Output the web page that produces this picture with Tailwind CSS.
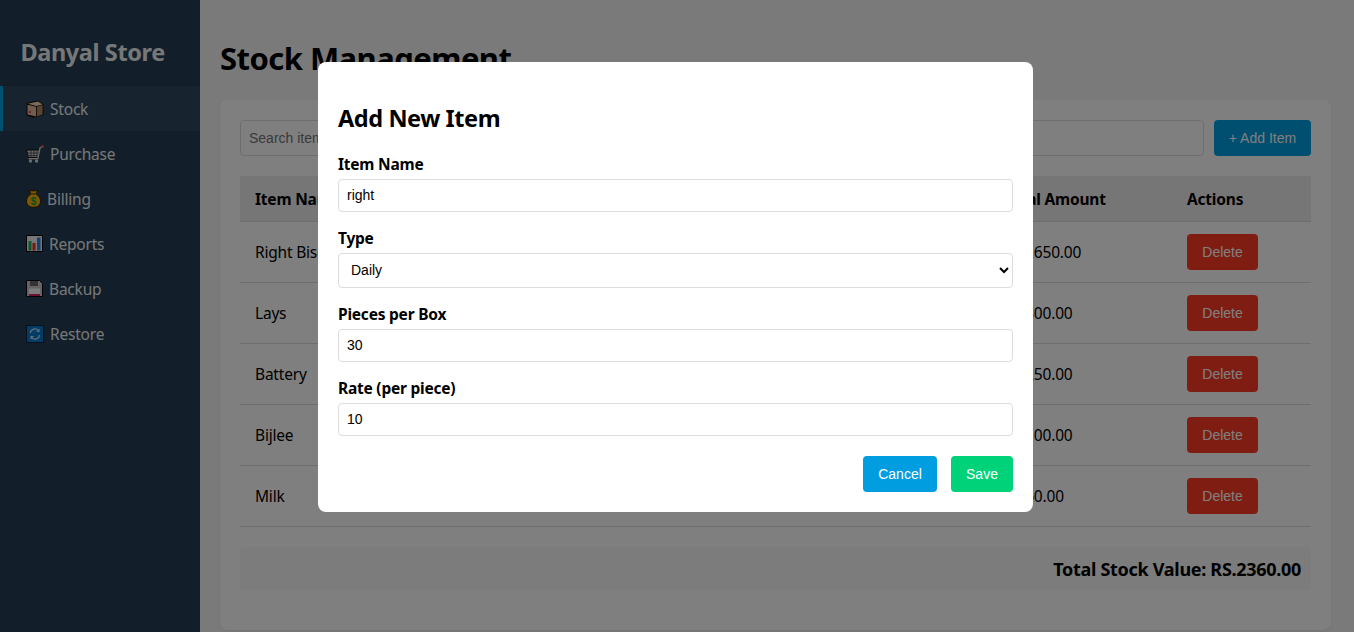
<!DOCTYPE html>
<html lang="en">
<head>
  <meta charset="UTF-8" />
  <meta name="viewport" content="width=device-width, initial-scale=1" />
  <title>Danyal Store - Stock Management</title>
  <script src="https://cdn.jsdelivr.net/npm/@tailwindcss/browser@4"></script>
</head>
<body class="bg-[#f5f5f5] font-['Noto_Sans',sans-serif] text-black">
  <div class="relative w-screen h-screen overflow-hidden">
    <div class="flex w-[1351px] h-full">

      <!-- Sidebar -->
      <aside class="w-[200px] shrink-0 bg-[#243c52] text-[#fff]">
        <h1 class="pt-[36px] pl-[20.5px] h-[86px] text-[23.5px] leading-[33px] font-bold tracking-[-0.4px] text-[#ecf0f1]">Danyal Store</h1>
        <nav class="text-[15.5px] text-[#ecf0f1] tracking-[-0.2px]">
          <a class="flex items-center h-[45px] pl-[23px] border-l-[3px] border-[#00a0e0] bg-[#2e475e]">
            <svg class="w-[18px] h-[18px] mr-[6px]" viewBox="0 0 18 18"><path d="M.5 3L12 .5l5.500 4V15L8 17.800.5 15.500z" fill="#0c0c0c"/><path d="M1.500 4.800l8.500 2v9.800l-8.500-2z" fill="#e6b893"/><path d="M10.800 6.800l5.800-1.800v9.500l-5.800 1.900z" fill="#b08560"/><path d="M1.800 3.800L12 1.500l4.500 2.900-6 1.700z" fill="#f5d8b8"/><rect x="3" y="11" width="2" height="2" fill="#e04050"/></svg>
            <span class="pt-[2px]">Stock</span>
          </a>
          <a class="flex items-center h-[45px] pl-[26px]">
            <svg class="w-[18px] h-[18px] mr-[6px]" viewBox="0 0 18 18"><path d="M.5 5h13l-1.500 7.500H2.500z" fill="#cfcfcf" stroke="#111"/><path d="M2 8h10.500M2.500 10.500h9.500M5 5v7.500M8 5v7.500M11 5v7.500" stroke="#444" stroke-width=".8"/><path d="M12 13l2-10 2.500-1.500" fill="none" stroke="#d8d8d8" stroke-width="1.300"/><circle cx="16.500" cy="1.500" r="1.400" fill="#f05050"/><rect x="2.500" y="13" width="10" height="1.300" fill="#d8d8d8"/><circle cx="4.500" cy="16" r="1.700" fill="#d8d8d8"/><circle cx="10.500" cy="16" r="1.700" fill="#d8d8d8"/></svg>
            <span class="pt-[2px]">Purchase</span>
          </a>
          <a class="flex items-center h-[45px] pl-[26px]">
            <svg class="w-[15px] h-[18px] mr-[6px]" viewBox="0 0 15 18"><path d="M3 .8h9l-2 3c1 1 4.500 3 4.500 7.500 0 4-3 6-7 6s-7-2-7-6C.5 6.800 4 4.800 5 3.800z" fill="#f2ae0a" stroke="#2a1c00"/><rect x="4.500" y="3.200" width="6" height="1.300" fill="#7a5500"/><text x="7.500" y="14.500" font-size="10" font-weight="700" text-anchor="middle" fill="#14a040" font-family="Liberation Sans">$</text></svg>
            <span class="pt-[2px]">Billing</span>
          </a>
          <a class="flex items-center h-[45px] pl-[26px]">
            <svg class="w-[17px] h-[17px] mr-[6px]" viewBox="0 0 17 17"><rect x=".5" y=".5" width="16" height="16" fill="#eeeeee" stroke="#000"/><rect x="2.500" y="6" width="3" height="9.500" fill="#18b060"/><rect x="6.500" y="8" width="3" height="7.500" fill="#e83020"/><rect x="11" y="2.500" width="3.500" height="13" fill="#2088e8"/></svg>
            <span class="pt-[2px]">Reports</span>
          </a>
          <a class="flex items-center h-[45px] pl-[26px]">
            <svg class="w-[17px] h-[17px] mr-[6px]" viewBox="0 0 17 17"><path d="M.5.5h13l3 3v13H.5z" fill="#c8c8c8" stroke="#000"/><rect x="4" y="1" width="8" height="5" fill="#666"/><rect x="3" y="8.500" width="11" height="7.500" fill="#f8f8f8"/><rect x="3" y="14" width="11" height="2" fill="#d8206a"/></svg>
            <span class="pt-[2px]">Backup</span>
          </a>
          <a class="flex items-center h-[45px] pl-[26px]">
            <svg class="w-[18px] h-[18px] mr-[6px]" viewBox="0 0 18 18"><rect x=".5" y=".5" width="17" height="17" fill="#0a78c8" stroke="#06233c"/><path d="M4.300 8a4.800 4.800 0 0 1 8.200-2.700M13.700 10a4.800 4.800 0 0 1-8.200 2.700" fill="none" stroke="#bfe3ff" stroke-width="1.200"/><path d="M13.500 3.500v3.500h-3.500zM4.500 14.500v-3.500h3.500z" fill="#bfe3ff"/></svg>
            <span class="pt-[2px]">Restore</span>
          </a>
        </nav>
      </aside>

      <!-- Main -->
      <main class="flex-1 min-w-0 px-[20px]">
        <h2 class="pt-[36px] h-[100px] text-[31px] leading-[44px] font-bold tracking-[-0.55px]">Stock Management</h2>
        <section class="bg-white rounded-[8px] shadow-[0_2px_5px_rgba(0,0,0,0.05)] p-[20px] h-[530px]">
          <div class="flex gap-[10px] mb-[21px] h-[36px]">
            <input type="text" placeholder="Search items..." class="flex-1 min-w-0 h-[36px] px-[8px] border border-[#ddd] rounded-[4px] text-[14px] font-['Liberation_Sans',sans-serif] placeholder:text-[#757575]" />
            <button class="w-[97px] h-[36px] bg-[#009ee0] text-white rounded-[4px] text-[14px] font-['Liberation_Sans',sans-serif]">+ Add Item</button>
          </div>

          <table class="w-full table-fixed border-collapse text-[15.5px] tracking-[-0.2px] -mt-[1px] [&_td:not(:last-child)]:pt-[2px] [&_th]:pt-[2px]">
            <colgroup>
              <col class="w-[180px]" /><col class="w-[150px]" /><col class="w-[190px]" /><col class="w-[120px]" /><col class="w-[108.5px]" /><col class="w-[183.5px]" /><col class="w-[139px]" />
            </colgroup>
            <thead>
              <tr class="h-[45px] bg-[#ececec] border-b border-[#ddd] text-left">
                <th class="pl-[15px] font-bold">Item Name</th>
                <th class="pl-[15px] font-bold">Type</th>
                <th class="pl-[15px] font-bold">Pieces per Box</th>
                <th class="pl-[15px] font-bold">Rate</th>
                <th class="pl-[15px] font-bold">Stock</th>
                <th class="pl-[15px] font-bold">Total Amount</th>
                <th class="pl-[15px] font-bold">Actions</th>
              </tr>
            </thead>
            <tbody>
              <tr class="h-[61px] border-b border-[#ddd]">
                <td class="pl-[15px]">Right Biscuit</td><td class="pl-[15px]">Daily</td><td class="pl-[15px]">30</td><td class="pl-[15px]">10</td><td class="pl-[15px]">165</td><td class="pl-[15px]">RS.1650.00</td>
                <td class="pl-[15px]"><button class="w-[71px] h-[36px] pt-[1px] bg-[#fe3b26] text-white rounded-[4px] text-[14px] font-['Liberation_Sans',sans-serif] tracking-normal">Delete</button></td>
              </tr>
              <tr class="h-[61px] border-b border-[#ddd]">
                <td class="pl-[15px]">Lays</td><td class="pl-[15px]">Daily</td><td class="pl-[15px]">24</td><td class="pl-[15px]">10</td><td class="pl-[15px]">30</td><td class="pl-[15px]">RS.300.00</td>
                <td class="pl-[15px]"><button class="w-[71px] h-[36px] pt-[1px] bg-[#fe3b26] text-white rounded-[4px] text-[14px] font-['Liberation_Sans',sans-serif] tracking-normal">Delete</button></td>
              </tr>
              <tr class="h-[61px] border-b border-[#ddd]">
                <td class="pl-[15px]">Battery</td><td class="pl-[15px]">Daily</td><td class="pl-[15px]">10</td><td class="pl-[15px]">25</td><td class="pl-[15px]">10</td><td class="pl-[15px]">RS.250.00</td>
                <td class="pl-[15px]"><button class="w-[71px] h-[36px] pt-[1px] bg-[#fe3b26] text-white rounded-[4px] text-[14px] font-['Liberation_Sans',sans-serif] tracking-normal">Delete</button></td>
              </tr>
              <tr class="h-[61px] border-b border-[#ddd]">
                <td class="pl-[15px]">Bijlee</td><td class="pl-[15px]">Daily</td><td class="pl-[15px]">10</td><td class="pl-[15px]">10</td><td class="pl-[15px]">10</td><td class="pl-[15px]">RS.100.00</td>
                <td class="pl-[15px]"><button class="w-[71px] h-[36px] pt-[1px] bg-[#fe3b26] text-white rounded-[4px] text-[14px] font-['Liberation_Sans',sans-serif] tracking-normal">Delete</button></td>
              </tr>
              <tr class="h-[61px] border-b border-[#ddd]">
                <td class="pl-[15px]">Milk</td><td class="pl-[15px]">Daily</td><td class="pl-[15px]">12</td><td class="pl-[15px]">5</td><td class="pl-[15px]">12</td><td class="pl-[15px]">RS.60.00</td>
                <td class="pl-[15px]"><button class="w-[71px] h-[36px] pt-[1px] bg-[#fe3b26] text-white rounded-[4px] text-[14px] font-['Liberation_Sans',sans-serif] tracking-normal">Delete</button></td>
              </tr>
            </tbody>
          </table>

          <div class="mt-[20px] h-[43px] pr-[10px] pt-[2px] flex items-center justify-end bg-[#f8f8f8] rounded-[4px] text-[18px] font-bold tracking-[-0.3px]">Total Stock Value: RS.2360.00</div>
        </section>
      </main>
    </div>

    <!-- Add item modal -->
    <div class="absolute inset-0 bg-black/50">
      <form class="absolute left-[318px] top-[62px] w-[715px] h-[450px] bg-white rounded-[8px] px-[20px] pt-[40px]">
        <h3 class="text-[23.5px] leading-[32px] font-bold mb-[19px] tracking-[-0.42px]">Add New Item</h3>
        <div class="mb-[15px]">
          <label class="block mb-[4px] text-[15.5px] leading-[22px] font-bold tracking-[-0.22px]">Item Name</label>
          <input type="text" value="right" class="block w-full h-[33px] px-[8px] pb-[1px] border border-[#ddd] rounded-[4px] text-[14px] font-['Liberation_Sans',sans-serif]" />
        </div>
        <div class="mb-[15px]">
          <label class="block mb-[4px] text-[15.5px] leading-[22px] font-bold tracking-[-0.22px]">Type</label>
          <select class="block w-full h-[35px] px-[8px] pb-[1px] border border-[#ddd] rounded-[4px] bg-white text-[14px] font-['Liberation_Sans',sans-serif]">
            <option>Daily</option>
          </select>
        </div>
        <div class="mb-[15px]">
          <label class="block mb-[4px] text-[15.5px] leading-[22px] font-bold tracking-[-0.22px]">Pieces per Box</label>
          <input type="number" value="30" class="block w-full h-[33px] px-[8px] pb-[1px] border border-[#ddd] rounded-[4px] text-[14px] font-['Liberation_Sans',sans-serif]" />
        </div>
        <div class="mb-[20px]">
          <label class="block mb-[4px] text-[15.5px] leading-[22px] font-bold tracking-[-0.22px]">Rate (per piece)</label>
          <input type="number" value="10" class="block w-full h-[33px] px-[8px] pb-[1px] border border-[#ddd] rounded-[4px] text-[14px] font-['Liberation_Sans',sans-serif]" />
        </div>
        <div class="flex justify-end gap-[14px]">
          <button type="button" class="w-[74px] h-[36px] bg-[#009ee0] text-white rounded-[4px] text-[14px] font-['Liberation_Sans',sans-serif]">Cancel</button>
          <button type="button" class="w-[62px] h-[36px] bg-[#00d27a] text-white rounded-[4px] text-[14px] font-['Liberation_Sans',sans-serif]">Save</button>
        </div>
      </form>
    </div>
  </div>
</body>
</html>
